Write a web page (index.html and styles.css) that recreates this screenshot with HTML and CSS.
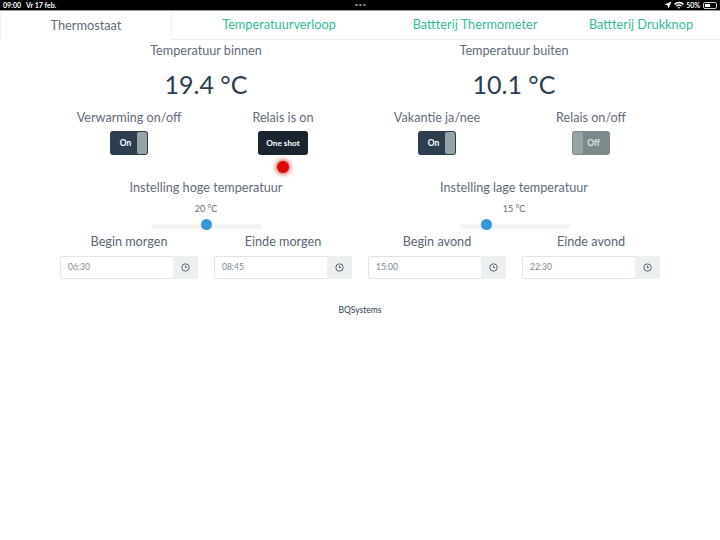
FILE: index.html
```html
<!DOCTYPE html>
<html lang="en">
<head>
    <meta charset="UTF-8">
    <meta name="viewport" content="width=device-width, initial-scale=1.0">
    <title>Thermostaat</title>
    <link rel="stylesheet" href="styles.css">
</head>
<body>
    <div class="statusbar">
        <div class="status-left"><span>09:00</span><span>Vr 17 feb.</span></div>
        <div class="status-dots"><i></i><i></i><i></i></div>
        <div class="status-right">
            <svg width="8" height="8" viewBox="0 0 8 8"><path d="M7.5.5 4.4 7.5 3.6 4.4.5 3.6z" fill="#fff"/></svg>
            <svg width="10" height="8" viewBox="0 0 10 8"><path d="M0 2.8a7 7 0 0 1 10 0L8.9 4a5.4 5.4 0 0 0-7.8 0zM2 4.7a4.3 4.3 0 0 1 6 0L7 5.8a2.8 2.8 0 0 0-4 0zM3.8 6.5a1.7 1.7 0 0 1 2.4 0L5 7.8z" fill="#fff"/></svg>
            <span>50%</span>
            <span class="battery"><span class="battery-level"></span></span>
        </div>
    </div>

    <nav class="tabs">
        <a class="tab active">Thermostaat</a>
        <a class="tab">Temperatuurverloop</a>
        <a class="tab">Battterij Thermometer</a>
        <a class="tab">Battterij Drukknop</a>
    </nav>

    <main class="panel">
        <section class="reading">
            <h2>Temperatuur binnen</h2>
            <div class="temp">19.4 °C</div>
        </section>
        <section class="reading">
            <h2>Temperatuur buiten</h2>
            <div class="temp">10.1 °C</div>
        </section>

        <div class="control">
            <h2>Verwarming on/off</h2>
            <div class="switch on"><span>On</span><i></i></div>
        </div>
        <div class="control">
            <h2>Relais is on</h2>
            <button class="shot">One shot</button>
            <div class="led"></div>
        </div>
        <div class="control">
            <h2>Vakantie ja/nee</h2>
            <div class="switch on"><span>On</span><i></i></div>
        </div>
        <div class="control">
            <h2>Relais on/off</h2>
            <div class="switch off"><i></i><span>Off</span></div>
        </div>

        <section class="setting">
            <h2>Instelling hoge temperatuur</h2>
            <div class="slider-value">20 °C</div>
            <div class="slider"><i class="thumb-high"></i></div>
        </section>
        <section class="setting">
            <h2>Instelling lage temperatuur</h2>
            <div class="slider-value">15 °C</div>
            <div class="slider"><i class="thumb-low"></i></div>
        </section>

        <div class="time">
            <label>Begin morgen</label>
            <div class="time-input"><span>06:30</span><b><svg width="9" height="9" viewBox="0 0 9 9"><circle cx="4.5" cy="4.5" r="3.7"/><path d="M4.5 2.5v2.2h1.6"/></svg></b></div>
        </div>
        <div class="time">
            <label>Einde morgen</label>
            <div class="time-input"><span>08:45</span><b><svg width="9" height="9" viewBox="0 0 9 9"><circle cx="4.5" cy="4.5" r="3.7"/><path d="M4.5 2.5v2.2h1.6"/></svg></b></div>
        </div>
        <div class="time">
            <label>Begin avond</label>
            <div class="time-input"><span>15:00</span><b><svg width="9" height="9" viewBox="0 0 9 9"><circle cx="4.5" cy="4.5" r="3.7"/><path d="M4.5 2.5v2.2h1.6"/></svg></b></div>
        </div>
        <div class="time">
            <label>Einde avond</label>
            <div class="time-input"><span>22:30</span><b><svg width="9" height="9" viewBox="0 0 9 9"><circle cx="4.5" cy="4.5" r="3.7"/><path d="M4.5 2.5v2.2h1.6"/></svg></b></div>
        </div>
    </main>

    <footer class="footer">BQSystems</footer>
</body>
</html>
```

FILE: styles.css
```css
* { box-sizing: border-box; }
body { margin: 0; background: #fff; font-family: Lato, "Open Sans", sans-serif; color: #5f6b7a; }
h2 { margin: 0; font-size: 12.65px; font-weight: 400; line-height: 16px; }

.statusbar { display: flex; align-items: center; justify-content: space-between; height: 11px; padding: 0 3px; background: #000; border-bottom: 1px solid #999; color: #fff; font-size: 7px; font-weight: 700; line-height: 10px; position: relative; }
.status-left { display: flex; gap: 5px; }
.status-dots { display: flex; gap: 1px; position: absolute; left: 355px; top: 4px; }
.status-dots i { width: 3px; height: 2px; border-radius: 50%; background: #888; }
.status-right { display: flex; align-items: center; gap: 2px; }
.battery { display: inline-block; width: 14px; height: 7px; margin-left: 1px; padding: 1px; border: 1px solid #ccc; border-radius: 2px; }
.battery-level { display: block; width: 50%; height: 100%; background: #fff; }

.tabs { display: grid; grid-template-columns: 172px 214px 178px 154px; height: 29px; border-bottom: 1px solid #ecf0f1; }
.tab { display: flex; align-items: center; justify-content: center; padding-bottom: 2px; color: #33ba99; font-size: 12.75px; }
.tab.active { margin-bottom: -1px; background: #fff; border: 1px solid #ecf0f1; border-width: 0 1px; color: #5f6b7a; }

.panel { display: grid; grid-template-columns: repeat(4, 154px); justify-content: center; }
.reading, .setting { grid-column: span 2; text-align: center; }
.reading { padding-top: 3px; }
.temp { margin-top: 9px; color: #2c3e50; font-size: 25px; font-weight: 400; line-height: 33px; }

.control { display: flex; flex-direction: column; align-items: center; height: 79px; padding-top: 9px; }
.switch { display: flex; justify-content: space-between; width: 38px; height: 24px; margin-top: 5px; border-radius: 3px; overflow: hidden; font-size: 8.5px; font-weight: 700; color: #fff; }
.switch span { flex: 1; text-align: center; line-height: 24px; }
.switch i { width: 10px; margin: 1px; border-radius: 2px; background: #95a5a6; }
.switch.on { background: #2c3e50; }
.switch.on span { padding-left: 5px; }
.switch.off { background: #7b8a8b; }
.switch.off span { padding-right: 7px; color: #dfe5e5; }
.shot { width: 50px; height: 24px; margin-top: 5px; padding: 0; border: 0; border-radius: 3px; background: #1a252f; color: #fff; font-family: inherit; font-size: 8.2px; font-weight: 700; }
.led { width: 12px; height: 12px; margin-top: 6px; border-radius: 50%; background: #dd0a0a; box-shadow: 0 0 5px 1px rgba(200, 0, 0, .75); }

.slider-value { margin-top: 7px; font-size: 9px; line-height: 12px; }
.slider { position: relative; width: 111px; height: 5px; margin: 9px auto 0; border-radius: 3px; background: #f4f4f4; }
.slider i { position: absolute; top: -5px; width: 11px; height: 11px; border-radius: 50%; background: #3498db; }
.thumb-high { left: 50px; }
.thumb-low { left: 22px; }

.time { padding: 0 8px; text-align: center; }
.time label { display: block; margin-top: 5px; font-size: 12.65px; line-height: 16px; color: #5a6778; }
.time-input { display: flex; height: 23px; margin-top: 6px; border: 1px solid #dce4ec; border-radius: 2px; font-size: 8.5px; text-align: left; }
.time-input span { flex: 1; padding-left: 7px; line-height: 21px; color: #7b8794; }
.time-input b { display: flex; align-items: center; justify-content: center; width: 25px; margin: -1px; background: #ecf0f1; }
.time-input svg { fill: none; stroke: #4a5560; stroke-width: .9; }

.footer { margin-top: 25px; color: #2c3e50; font-size: 8.5px; line-height: 12px; text-align: center; }
```
